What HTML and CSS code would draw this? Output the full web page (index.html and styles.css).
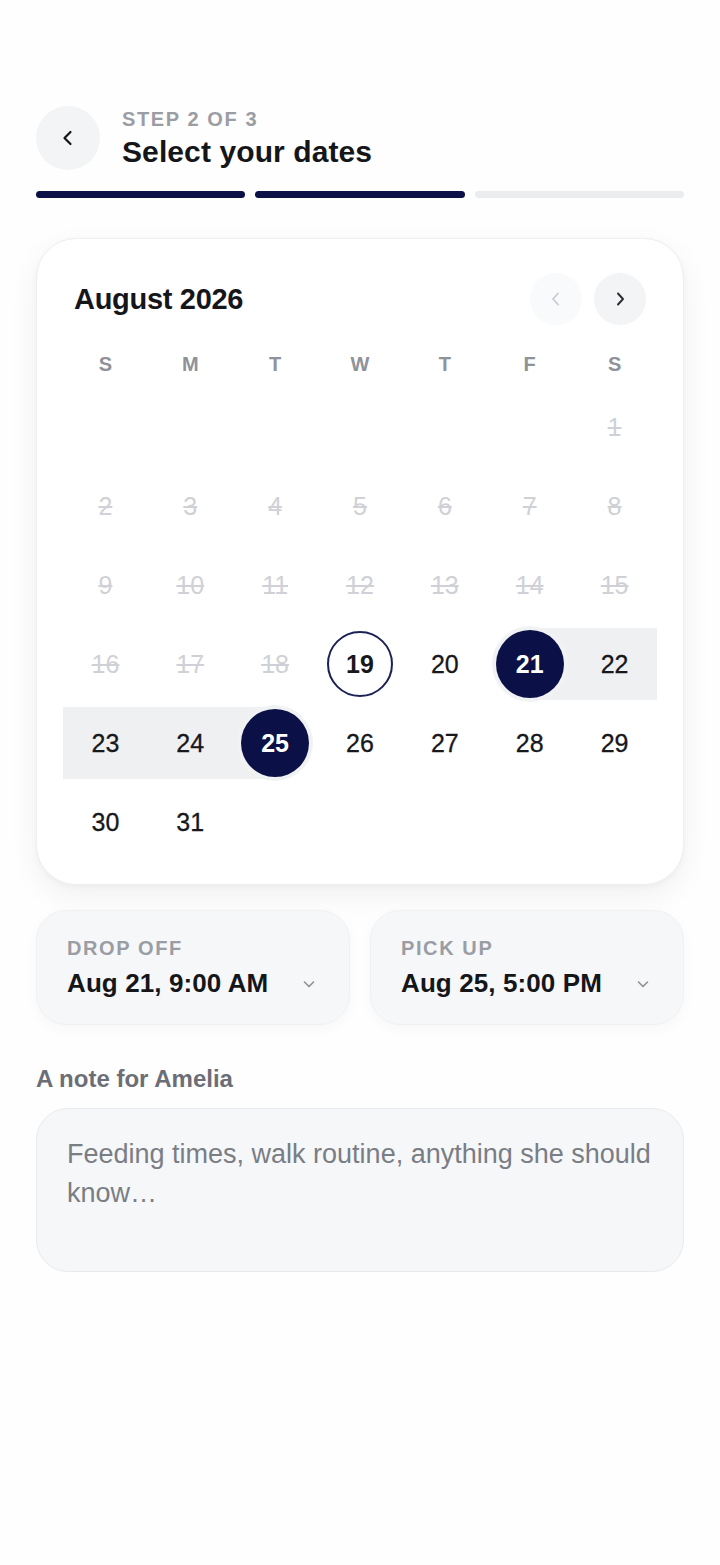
FILE: index.html
```html
<!DOCTYPE html>
<html lang="en">
<head>
<meta charset="utf-8">
<title>Select your dates</title>
<link rel="stylesheet" href="styles.css">
</head>
<body>
<main class="page">
  <header class="top">
    <button class="back" aria-label="Back">
      <svg width="20" height="20" viewBox="0 0 20 20"><path d="M12.5 4 L6.5 10 L12.5 16" fill="none" stroke="#15161a" stroke-width="2.2" stroke-linecap="round" stroke-linejoin="round"/></svg>
    </button>
    <div class="titles">
      <div class="step">STEP 2 OF 3</div>
      <h1 class="title">Select your dates</h1>
    </div>
  </header>

  <div class="progress">
    <span class="seg on"></span>
    <span class="seg on"></span>
    <span class="seg"></span>
  </div>

  <section class="calendar">
    <div class="cal-head">
      <h2 class="month">August 2026</h2>
      <div class="navs">
        <button class="nav disabled" aria-label="Previous month">
          <svg width="18" height="18" viewBox="0 0 18 18"><path d="M11 3.5 L6 9 L11 14.5" fill="none" stroke="#c9cbd0" stroke-width="1.8" stroke-linecap="round" stroke-linejoin="round"/></svg>
        </button>
        <button class="nav" aria-label="Next month">
          <svg width="18" height="18" viewBox="0 0 18 18"><path d="M7 3.5 L12 9 L7 14.5" fill="none" stroke="#2a2b30" stroke-width="1.9" stroke-linecap="round" stroke-linejoin="round"/></svg>
        </button>
      </div>
    </div>

    <div class="weekdays">
      <span>S</span><span>M</span><span>T</span><span>W</span><span>T</span><span>F</span><span>S</span>
    </div>

    <div class="days">
      <div class="day"></div><div class="day"></div><div class="day"></div><div class="day"></div><div class="day"></div><div class="day"></div>
      <div class="day off"><span>1</span></div>

      <div class="day off"><span>2</span></div>
      <div class="day off"><span>3</span></div>
      <div class="day off"><span>4</span></div>
      <div class="day off"><span>5</span></div>
      <div class="day off"><span>6</span></div>
      <div class="day off"><span>7</span></div>
      <div class="day off"><span>8</span></div>

      <div class="day off"><span>9</span></div>
      <div class="day off"><span>10</span></div>
      <div class="day off"><span>11</span></div>
      <div class="day off"><span>12</span></div>
      <div class="day off"><span>13</span></div>
      <div class="day off"><span>14</span></div>
      <div class="day off"><span>15</span></div>

      <div class="day off"><span>16</span></div>
      <div class="day off"><span>17</span></div>
      <div class="day off"><span>18</span></div>
      <div class="day today"><span>19</span></div>
      <div class="day"><span>20</span></div>
      <div class="day start"><span>21</span></div>
      <div class="day range"><span>22</span></div>

      <div class="day range"><span>23</span></div>
      <div class="day range"><span>24</span></div>
      <div class="day end"><span>25</span></div>
      <div class="day"><span>26</span></div>
      <div class="day"><span>27</span></div>
      <div class="day"><span>28</span></div>
      <div class="day"><span>29</span></div>

      <div class="day"><span>30</span></div>
      <div class="day"><span>31</span></div>
    </div>
  </section>

  <div class="times">
    <div class="time">
      <div class="time-text">
        <div class="label">DROP OFF</div>
        <div class="value">Aug 21, 9:00 AM</div>
      </div>
      <svg class="caret" width="16" height="16" viewBox="0 0 16 16"><path d="M3.5 6 L8 10.5 L12.5 6" fill="none" stroke="#8d9097" stroke-width="1.6" stroke-linecap="round" stroke-linejoin="round"/></svg>
    </div>
    <div class="time">
      <div class="time-text">
        <div class="label">PICK UP</div>
        <div class="value">Aug 25, 5:00 PM</div>
      </div>
      <svg class="caret" width="16" height="16" viewBox="0 0 16 16"><path d="M3.5 6 L8 10.5 L12.5 6" fill="none" stroke="#8d9097" stroke-width="1.6" stroke-linecap="round" stroke-linejoin="round"/></svg>
    </div>
  </div>

  <label class="note-label" for="note">A note for Amelia</label>
  <textarea id="note" class="note" placeholder="Feeding times, walk routine, anything she should know…"></textarea>
</main>
</body>
</html>
```

FILE: styles.css
```css
* { box-sizing: border-box; }

html, body {
  margin: 0;
  padding: 0;
  background: #fefefe;
}

body {
  font-family: "Liberation Sans", Arial, sans-serif;
  color: #15161a;
}

.page {
  width: 720px;
  padding: 106px 36px 0;
}

button {
  font: inherit;
  border: none;
  padding: 0;
  cursor: pointer;
}

.top {
  display: flex;
  align-items: center;
  gap: 22px;
  height: 64px;
}

.back {
  width: 64px;
  height: 64px;
  border-radius: 50%;
  background: #f3f4f6;
  display: flex;
  align-items: center;
  justify-content: center;
}

.titles {
  display: flex;
  flex-direction: column;
  gap: 5px;
}

.step {
  font-size: 20px;
  font-weight: 700;
  letter-spacing: 1.6px;
  color: #9b9da4;
  line-height: 22px;
}

.title {
  margin: 0;
  font-size: 30px;
  font-weight: 700;
  line-height: 34px;
  color: #15161a;
  letter-spacing: 0.1px;
}

.progress {
  display: flex;
  gap: 10px;
  margin-top: 21px;
}

.seg {
  flex: 1;
  height: 7px;
  border-radius: 4px;
  background: #ebecee;
}

.seg.on {
  background: #0b1046;
}

.calendar {
  margin-top: 40px;
  border: 1px solid #efeff1;
  border-radius: 40px;
  background: #ffffff;
  box-shadow: 0 10px 30px rgba(20, 24, 40, 0.06), 0 2px 6px rgba(20, 24, 40, 0.03);
  padding: 34px 26px 26px;
}

.cal-head {
  display: flex;
  align-items: center;
  justify-content: space-between;
  padding: 0 11px;
}

.month {
  margin: 0;
  font-size: 29px;
  font-weight: 700;
  letter-spacing: -0.3px;
  color: #15161a;
}

.navs {
  display: flex;
  gap: 12px;
}

.nav {
  width: 52px;
  height: 52px;
  border-radius: 50%;
  background: #f3f4f6;
  display: flex;
  align-items: center;
  justify-content: center;
}

.nav.disabled {
  background: #f9fafb;
}

.weekdays {
  display: grid;
  grid-template-columns: repeat(7, 1fr);
  margin-top: 24px;
  height: 30px;
  align-items: center;
  text-align: center;
  font-size: 20px;
  font-weight: 700;
  color: #8f9299;
}

.days {
  display: grid;
  grid-template-columns: repeat(7, 1fr);
  grid-auto-rows: 72px;
  row-gap: 7px;
  margin-top: 12px;
}

.day {
  display: flex;
  align-items: center;
  justify-content: center;
  font-size: 25px;
  color: #17181c;
  -webkit-text-stroke: 0.3px #17181c;
}

.day span {
  display: flex;
  align-items: center;
  justify-content: center;
  width: 66px;
  height: 66px;
  border-radius: 50%;
}

.day.off {
  color: #cfd1d6;
  -webkit-text-stroke: 0;
}

.day.off span {
  text-decoration: line-through;
}

.day.today span {
  border: 2px solid #1c2258;
  font-weight: 700;
  -webkit-text-stroke: 0;
}

.day.range {
  background: #eff0f2;
}

.day.start {
  background: linear-gradient(90deg, transparent 50%, #eff0f2 50%);
}

.day.end {
  background: linear-gradient(90deg, #eff0f2 50%, transparent 50%);
}

.day.start span,
.day.end span {
  width: 68px;
  height: 68px;
  background: #0b1046;
  color: #ffffff;
  font-weight: 700;
  -webkit-text-stroke: 0;
  box-shadow: 0 0 0 4px #f1f2f4;
}

.times {
  display: grid;
  grid-template-columns: 1fr 1fr;
  gap: 20px;
  margin-top: 25px;
}

.time {
  height: 115px;
  border-radius: 30px;
  background: #f6f7f9;
  border: 1px solid #f0f1f3;
  box-shadow: 0 4px 14px rgba(20, 24, 40, 0.03);
  display: flex;
  align-items: center;
  justify-content: space-between;
  padding: 0 32px 0 30px;
}

.time-text {
  display: flex;
  flex-direction: column;
  gap: 9px;
}

.label {
  font-size: 20px;
  font-weight: 700;
  letter-spacing: 1.6px;
  color: #9b9da4;
  line-height: 22px;
}

.value {
  font-size: 26px;
  font-weight: 700;
  color: #15161a;
  line-height: 30px;
  letter-spacing: 0.1px;
}

.caret {
  margin-top: 32px;
}

.note-label {
  display: block;
  margin-top: 40px;
  font-size: 24px;
  font-weight: 700;
  color: #6b6e76;
  line-height: 28px;
}

.note {
  display: block;
  width: 100%;
  height: 164px;
  margin-top: 15px;
  resize: none;
  border: 1px solid #e9eaed;
  border-radius: 32px;
  background: #f6f7f9;
  padding: 26px 30px;
  font-family: "Liberation Sans", Arial, sans-serif;
  font-size: 27px;
  line-height: 39px;
  color: #15161a;
  outline: none;
}

.note::placeholder {
  color: #7a7d84;
}
```
